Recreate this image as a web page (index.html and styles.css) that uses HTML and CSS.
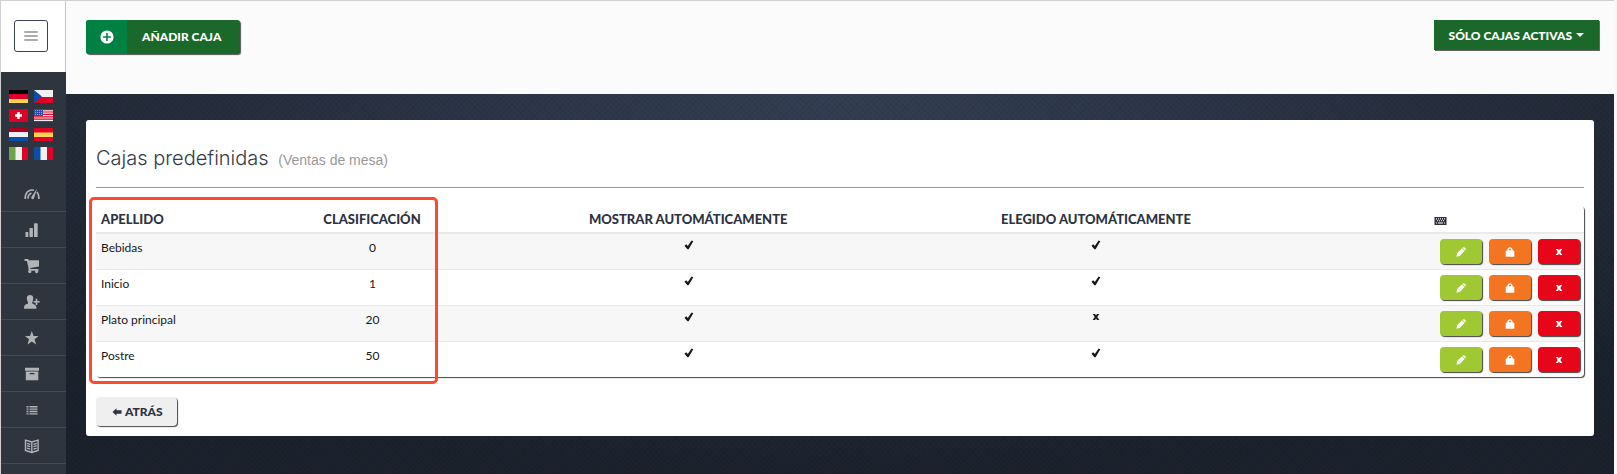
FILE: index.html
```html
<!DOCTYPE html>
<html lang="es">
	<head>
		<meta charset="utf-8">
		<meta name="viewport" content="width=device-width,initial-scale=1">
		<title>Cajas predefinidas</title>
		<link rel="stylesheet" href="styles.css">
	</head>
	<body>
		<svg class="symbols" aria-hidden="true">
			<symbol id="i-plus" viewBox="0 0 14 14"><path fill-rule="evenodd" d="M7 0.400a6.600 6.600 0 1 0 0 13.200a6.600 6.600 0 1 0 0-13.200zM6.200 3h1.600v3.200H11v1.600H7.800V11H6.200V7.800H3V6.200h3.200z"/></symbol>
			<symbol id="i-check" viewBox="0 0 10 10"><path d="M0.500 5.800L2.200 4.300L3.800 6L7.600 0.500L9.300 1.300L4.600 9.200L3.400 9.300z"/></symbol>
			<symbol id="i-cross" viewBox="0 0 10 10"><path d="M1.800 2h2.300L5 3.600L6 2h2.200L6.300 5l2 3H6L5 6.400L4 8H1.700l2-3z"/></symbol>
			<symbol id="i-pencil" viewBox="0 0 10 10"><path d="M5.900 1.300l2.700 2.700L3.600 9L0.500 9.800L1 6.200zM6.500 0.800L7 0.400Q7.900-0.200 8.700 0.600L9.400 1.300Q10.100 2.100 9.500 3L9.100 3.400z"/></symbol>
			<symbol id="i-lock" viewBox="0 0 10 10"><path fill-rule="evenodd" d="M2.300 3.300C2.500-0.900 7.500-0.900 7.700 3.300L9.300 4V9.200Q9.300 9.800 8.700 9.800H1.300Q0.700 9.800 0.700 9.200V4zM3.900 3.300h2.200C6.100 1 3.900 1 3.900 3.300z"/></symbol>
			<symbol id="i-back" viewBox="0 0 10 8"><path d="M0.500 4L4.500 0.300V2.300H9.500V5.700H4.500V7.700z"/></symbol>
			<symbol id="i-keyboard" viewBox="0 0 13 8"><path fill-rule="evenodd" d="M0.500 0h12v8h-12zM2 1.300v1.200h1V1.300zM4 1.300v1.200h1V1.300zM6 1.300v1.200h1V1.300zM8 1.300v1.200h1V1.300zM10 1.300v1.200h1V1.300zM3 3.300v1h1v-1zM5 3.300v1h1v-1zM7 3.300v1h1v-1zM9 3.300v1h1v-1zM2 5.500v1h1v-1zM4 5.500v1h5v-1zM10 5.500v1h1v-1z"/></symbol>
		</svg>
		<div class="page">
			<aside class="sidebar">
				<div class="sidebar-top">
					<button class="menu-toggle" type="button" aria-label="Menú"><span></span><span></span><span></span></button>
				</div>
				<div class="flags">
					<a href="#" aria-label="Deutsch"><svg viewBox="0 0 19 13"><path fill="#000" d="M0 0h19v5H0z"/><path fill="#de0025" d="M0 4h19v5H0z"/><path fill="#ffd34f" d="M0 9h19v4H0z"/></svg></a>
					<a href="#" aria-label="Čeština"><svg viewBox="0 0 19 13"><path fill="#f0f0f3" d="M0 0h19v7H0z"/><path fill="#de0025" d="M0 7h19v6H0z"/><path fill="#0b4ea8" d="M0 0l8 6.500L0 13z"/></svg></a>
					<a href="#" aria-label="Schweiz"><svg viewBox="0 0 19 13"><path fill="#de0025" d="M0 0h19v13H0z"/><path fill="#fff" d="M8.300 3h2.400v2.300H13v2.400h-2.300V10H8.300V7.700H6V5.300h2.300z"/></svg></a>
					<a href="#" aria-label="English"><svg viewBox="0 0 19 13"><path fill="#f3eff2" d="M0 0h19v13H0z"/><path stroke="#de0025" stroke-width="1.200" d="M0 .6h19M0 3h19M0 5.400h19M0 7.800h19M0 10.200h19M0 12.500h19"/><path fill="#2b4f9e" d="M0 0h9v7H0z"/><path stroke="#8fa4d0" stroke-dasharray="1 1" d="M1 1.500h7M1 3.500h7M1 5.500h7"/></svg></a>
					<a href="#" aria-label="Nederlands"><svg viewBox="0 0 19 13"><path fill="#aa0020" d="M0 0h19v4H0z"/><path fill="#f0f0f3" d="M0 4h19v5H0z"/><path fill="#0b4ea8" d="M0 9h19v4H0z"/></svg></a>
					<a href="#" aria-label="Español"><svg viewBox="0 0 19 13"><path fill="#de0025" d="M0 0h19v13H0z"/><path fill="#ffd34f" d="M0 4.500h19v4.500H0z"/></svg></a>
					<a href="#" aria-label="Italiano"><svg viewBox="0 0 19 13"><path fill="#6ca544" d="M0 0h7v13H0z"/><path fill="#f0f0f3" d="M6.500 0H13v13H6.500z"/><path fill="#de0025" d="M13 0h6v13h-6z"/></svg></a>
					<a href="#" aria-label="Français"><svg viewBox="0 0 19 13"><path fill="#0b4ea8" d="M0 0h7v13H0z"/><path fill="#f0f0f3" d="M6.500 0H13v13H6.500z"/><path fill="#de0025" d="M13 0h6v13h-6z"/></svg></a>
				</div>
				<nav class="side-nav">
					<a href="#" aria-label="Panel"><svg viewBox="0 0 16 16"><path fill="none" stroke="currentColor" stroke-width="1.600" d="M1.200 13C1 6.500 4.500 3.200 10 4.200M12.900 6c1.400 1.500 2.100 4 2 7M4 12.800c0-3 1.200-5 3.500-5.800"/><path d="M13 2.800L10 12.300c-.8 1.600-3.400.7-2.700-1.200z"/></svg></a>
					<a href="#" aria-label="Estadísticas"><svg viewBox="0 0 16 16"><rect x="1.500" y="10" width="2.800" height="5" rx=".6"/><rect x="5.500" y="6" width="3.400" height="9" rx=".6"/><rect x="10" y="1.200" width="3.700" height="13.800" rx=".6"/></svg></a>
					<a href="#" aria-label="Ventas"><svg viewBox="0 0 16 16"><path d="M.5 1h3.700l.6 1.300H15v6.200L6.500 10v1h8v1.800H4.500V9.800L2.900 3H.5z"/><circle cx="5.800" cy="13.600" r="1.600"/><circle cx="12.600" cy="13.600" r="1.600"/></svg></a>
					<a href="#" aria-label="Clientes"><svg viewBox="0 0 16 16"><path d="M6 1c3.600 0 3.800 3.200 2.700 6.200-.9 1.300-.6 2.300.6 2.800 2.200.8 3.200 1.600 3.200 4.800H0c0-3.200.7-3.900 3-4.700 1.300-.5 1.500-1.500.6-2.700C2.300 4 2.500 1 6 1z"/><path d="M11.700 4.800h1.600V7h2.400v1.600h-2.400v2.500h-1.600V8.600H9.500V7h2.200z"/></svg></a>
					<a href="#" aria-label="Favoritos"><svg viewBox="0 0 16 16"><path d="M7.800 1l1.800 5 5 .1-4 3.200 1.500 5.100-4.300-3-4.300 3L5 9.300 1 6.100 6 6z"/></svg></a>
					<a href="#" aria-label="Archivo"><svg viewBox="0 0 16 16"><path fill-rule="evenodd" d="M1 1.800h14v3H1zM1.800 5.500h12.500v8.700H1.800zM5.700 7v1.300h4.700V7z"/></svg></a>
					<a href="#" aria-label="Lista"><svg viewBox="0 0 16 16"><path d="M2.500 4h2v1.400h-2zM5.500 4h8v1.400h-8zM2.500 6.400h2v1.400h-2zM5.500 6.400h8v1.400h-8zM2.500 8.800h2v1.400h-2zM5.500 8.800h8v1.400h-8zM2.500 11.200h2v1.400h-2zM5.500 11.200h8v1.400h-8z"/></svg></a>
					<a href="#" aria-label="Manual"><svg viewBox="0 0 16 16"><path fill="none" stroke="currentColor" stroke-width="1.400" d="M1.500 2.200L7.800 4l6.300-1.800v10.300l-6.300 2-6.300-2zM7.800 4v10.500M3 5.300l3.200 1M3 7.700l3.200 1M3 10.100l3.200 1M12.700 5.300l-3.200 1M12.700 7.700l-3.200 1M12.700 10.100l-3.200 1"/></svg></a>
				</nav>
			</aside>
			<div class="main">
				<header class="toolbar">
					<button class="btn-add" type="button">
						<span class="btn-add-icon"><svg><use href="#i-plus"/></svg></span>
						<span class="btn-add-text">AÑADIR CAJA</span>
					</button>
					<button class="btn-filter" type="button">SÓLO CAJAS ACTIVAS <span class="caret"></span></button>
				</header>
				<main class="content">
					<section class="panel">
						<h1>Cajas predefinidas <small>(Ventas de mesa)</small></h1>
						<div class="table-wrap">
							<table>
								<colgroup>
									<col class="col-name"><col class="col-order"><col class="col-show"><col class="col-chosen"><col class="col-actions">
								</colgroup>
								<thead>
									<tr>
										<th class="name">APELLIDO</th>
										<th>CLASIFICACIÓN</th>
										<th>MOSTRAR AUTOMÁTICAMENTE</th>
										<th>ELEGIDO AUTOMÁTICAMENTE</th>
										<th><svg class="keyboard"><use href="#i-keyboard"/></svg></th>
									</tr>
								</thead>
								<tbody>
									<tr>
										<td class="name">Bebidas</td>
										<td>0</td>
										<td><svg class="mark"><use href="#i-check"/></svg></td>
										<td><svg class="mark"><use href="#i-check"/></svg></td>
										<td>
											<div class="actions">
												<button class="btn btn-edit" type="button" aria-label="Editar"><svg><use href="#i-pencil"/></svg></button>
												<button class="btn btn-lock" type="button" aria-label="Bloquear"><svg><use href="#i-lock"/></svg></button>
												<button class="btn btn-delete" type="button" aria-label="Eliminar"><svg><use href="#i-cross"/></svg></button>
											</div>
										</td>
									</tr>
									<tr>
										<td class="name">Inicio</td>
										<td>1</td>
										<td><svg class="mark"><use href="#i-check"/></svg></td>
										<td><svg class="mark"><use href="#i-check"/></svg></td>
										<td>
											<div class="actions">
												<button class="btn btn-edit" type="button" aria-label="Editar"><svg><use href="#i-pencil"/></svg></button>
												<button class="btn btn-lock" type="button" aria-label="Bloquear"><svg><use href="#i-lock"/></svg></button>
												<button class="btn btn-delete" type="button" aria-label="Eliminar"><svg><use href="#i-cross"/></svg></button>
											</div>
										</td>
									</tr>
									<tr>
										<td class="name">Plato principal</td>
										<td>20</td>
										<td><svg class="mark"><use href="#i-check"/></svg></td>
										<td><svg class="mark"><use href="#i-cross"/></svg></td>
										<td>
											<div class="actions">
												<button class="btn btn-edit" type="button" aria-label="Editar"><svg><use href="#i-pencil"/></svg></button>
												<button class="btn btn-lock" type="button" aria-label="Bloquear"><svg><use href="#i-lock"/></svg></button>
												<button class="btn btn-delete" type="button" aria-label="Eliminar"><svg><use href="#i-cross"/></svg></button>
											</div>
										</td>
									</tr>
									<tr>
										<td class="name">Postre</td>
										<td>50</td>
										<td><svg class="mark"><use href="#i-check"/></svg></td>
										<td><svg class="mark"><use href="#i-check"/></svg></td>
										<td>
											<div class="actions">
												<button class="btn btn-edit" type="button" aria-label="Editar"><svg><use href="#i-pencil"/></svg></button>
												<button class="btn btn-lock" type="button" aria-label="Bloquear"><svg><use href="#i-lock"/></svg></button>
												<button class="btn btn-delete" type="button" aria-label="Eliminar"><svg><use href="#i-cross"/></svg></button>
											</div>
										</td>
									</tr>
								</tbody>
							</table>
							<div class="highlight"></div>
						</div>
						<button class="btn-back" type="button"><svg><use href="#i-back"/></svg>ATRÁS</button>
					</section>
				</main>
			</div>
		</div>
	</body>
</html>
```
FILE: styles.css
```css
* {
	box-sizing: border-box;
}
body {
	margin: 0;
	font-family: Lato, "Open Sans", sans-serif;
	font-size: 12px;
	line-height: 18px;
	color: #14171c;
	background: #f8f8f8;
}
button {
	font-family: inherit;
	font-size: 12px;
	font-weight: 900;
	border: 0;
	padding: 0;
	cursor: pointer;
}
svg {
	display: block;
	fill: currentColor;
}
.symbols {
	display: none;
}
.page {
	display: flex;
	min-height: 100vh;
	margin-right: 3px;
	border-top: 1px solid #d0d0d0;
	border-left: 1px solid #d0d0d0;
}

/* sidebar */
.sidebar {
	width: 65px;
	flex: none;
	background: #2f353f;
}
.sidebar-top {
	height: 71px;
	padding: 19px 0 0 13px;
	background: #fff;
	border-right: 1px solid #c4c4c4;
}
.menu-toggle {
	display: flex;
	flex-direction: column;
	align-items: center;
	justify-content: center;
	gap: 2px;
	width: 34px;
	height: 32px;
	background: #fff;
	border: 1px solid #3d4350;
	border-radius: 3px;
}
.menu-toggle span {
	width: 14px;
	height: 2px;
	border-radius: 1px;
	background: #a9acb1;
}
.flags {
	display: grid;
	grid-template-columns: 19px 19px;
	gap: 6px;
	padding: 18px 8px 16px;
}
.flags svg {
	width: 19px;
	height: 13px;
}
.side-nav a {
	display: flex;
	align-items: center;
	justify-content: center;
	height: 36px;
	padding-right: 4px;
	color: #b1b3b7;
	border-bottom: 1px solid #454a54;
}
.side-nav svg {
	width: 16px;
	height: 16px;
}

/* toolbar */
.main {
	flex: 1;
	display: flex;
	flex-direction: column;
}
.toolbar {
	display: flex;
	justify-content: space-between;
	align-items: flex-start;
	height: 93px;
	padding: 19px 15px 0 20px;
	background: #fbfbfb;
}
.btn-add {
	display: flex;
	height: 34px;
	line-height: 34px;
	color: #fff;
	background: #1a692a;
	border-radius: 3px;
	box-shadow: 1px 1px 1px #555;
	overflow: hidden;
}
.btn-add-icon {
	display: flex;
	align-items: center;
	justify-content: center;
	width: 41px;
	height: 34px;
	background: #008143;
}
.btn-add-icon svg {
	width: 14px;
	height: 14px;
}
.btn-add-text {
	padding: 0 19px 0 15px;
}
.btn-filter {
	display: flex;
	align-items: center;
	height: 30px;
	padding: 0 15px;
	color: #fff;
	background: #1a692a;
	box-shadow: 1px 1px 0 #666;
}
.caret {
	margin-left: 4px;
	border: 4px solid transparent;
	border-top-color: #fff;
	border-bottom: 0;
}

/* content */
.content {
	flex: 1;
	padding: 26px 20px 37px;
	background:
		repeating-linear-gradient(45deg, rgba(0, 0, 0, .06) 0 1px, transparent 1px 4px),
		repeating-linear-gradient(-45deg, rgba(0, 0, 0, .06) 0 1px, transparent 1px 4px),
		radial-gradient(ellipse 70% 100% at 50% 0, #343f54, #1c222d);
}
.panel {
	padding: 20px 10px 10px;
	background: #fff;
	border-radius: 3px;
}
h1 {
	margin: 0 0 18px;
	padding-bottom: 11px;
	font-family: Inter, "Liberation Sans", sans-serif;
	font-size: 20px;
	font-weight: 300;
	line-height: 36px;
	color: #353b48;
	border-bottom: 1px solid #999;
}
h1 small {
	margin-left: 4px;
	font-family: "Liberation Sans", Arial, sans-serif;
	font-size: 14px;
	line-height: 18px;
	color: #999;
}
.table-wrap {
	position: relative;
	margin-bottom: 20px;
}
table {
	width: 100%;
	table-layout: fixed;
	border-collapse: separate;
	border-spacing: 0;
	border-radius: 4px;
	box-shadow: 1px 1px 1px #444;
}
.col-name {
	width: 11.2%;
}
.col-order {
	width: 14.7%;
}
.col-show {
	width: 27.8%;
}
.col-chosen {
	width: 27%;
}
.col-actions {
	width: 19.3%;
}
th {
	height: 28px;
	padding: 4px 5px;
	font-size: 13px;
	font-weight: 900;
	color: #2d333f;
	border-bottom: 2px solid #eaeaea;
}
td {
	height: 36px;
	padding: 5px 4px 5px 5px;
	text-align: center;
	vertical-align: top;
	border-bottom: 1px solid #e8e8e8;
}
tbody tr:nth-child(odd) td {
	background: #f7f7f7;
}
tbody tr:last-child td {
	height: 35px;
	border-bottom: 0;
}
.name {
	text-align: left;
}
.mark {
	width: 10px;
	height: 10px;
	margin: 1px auto 0;
}
.keyboard {
	width: 13px;
	height: 8px;
	margin: 3px auto 0;
}
.actions {
	display: flex;
	justify-content: flex-end;
	gap: 7px;
}
.btn {
	display: flex;
	align-items: center;
	justify-content: center;
	width: 42px;
	height: 25px;
	color: #fff;
	border-radius: 4px;
	box-shadow: 1px 1px 1px #444;
}
.btn svg {
	width: 10px;
	height: 10px;
}
.btn-edit {
	background: #a0c832;
}
.btn-lock {
	background: #f47521;
}
.btn-delete {
	background: #e60519;
}
.highlight {
	position: absolute;
	top: -9px;
	left: -7px;
	width: 349px;
	bottom: -7px;
	border: 3px solid #fd4a2c;
	border-radius: 5px;
	pointer-events: none;
}
.btn-back {
	display: flex;
	align-items: center;
	gap: 3px;
	height: 29px;
	padding: 0 14px 0 16px;
	color: #2d333f;
	background: #efefef;
	border-radius: 4px;
	box-shadow: 1px 1px 1px #444;
}
.btn-back svg {
	width: 10px;
	height: 8px;
}
```
